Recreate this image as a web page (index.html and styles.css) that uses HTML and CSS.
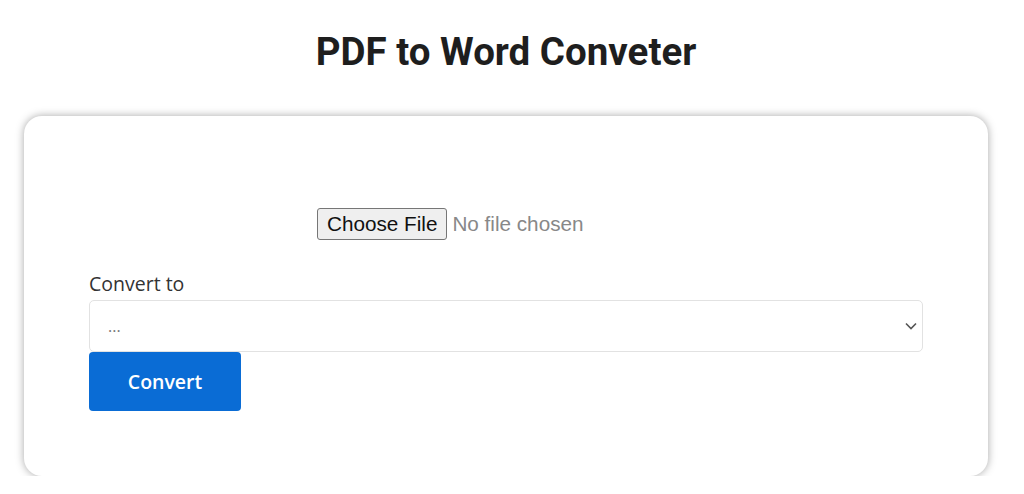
FILE: index.html
```html
<!DOCTYPE html>
<html>
<head>
<meta charset="utf-8">
<link rel="stylesheet" href="styles.css">
</head>
<body>
<div class="page">
<h1 class="title">PDF to Word Conveter</h1>
<div class="card">
  <form class="form">
    <div class="file-row">
      <input class="file-input" type="file">
    </div>
    <label class="label">Convert to</label>
    <div class="select-wrap">
      <select class="select"><option>...</option></select>
      <svg class="chev" width="12" height="8" viewBox="0 0 12 8"><path d="M1 1.5l5 5 5-5" fill="none" stroke="#555" stroke-width="1.6"/></svg>
    </div>
    <button class="btn" type="button">Convert</button>
  </form>
</div>
</div>
</body>
</html>
```
FILE: styles.css
```css
html, body { margin: 0; padding: 0; background: #fff; }
body { font-family: "Open Sans", "Noto Sans", sans-serif; color: #222; }
.page { width: 1012px; }
.title {
  font-family: Roboto, sans-serif;
  font-weight: 700;
  font-size: 38.5px;
  color: #1e1e1e;
  text-align: center;
  margin: 0;
  padding-top: 29px;
  line-height: 46px;
}
.card {
  margin: 41px 24px 0 24px;
  height: 360px;
  background: #fff;
  border-radius: 18px;
  box-shadow: 0 0 9px rgba(0,0,0,0.35);
  box-sizing: border-box;
  padding: 92px 65px 0 65px;
}
.form { display: flex; flex-direction: column; align-items: stretch; }
.file-row { padding-left: 228px; height: 32px; }
.file-input {
  font-family: "Liberation Sans", Arial, sans-serif;
  font-size: 20.7px;
  color: #888;
}
.file-input::file-selector-button {
  font-family: "Liberation Sans", Arial, sans-serif;
  font-size: 20.7px;
  color: #111;
  background: #efefef;
  border: 1px solid #767676;
  border-radius: 3px;
  padding: 1px 9px;
  margin-right: 5px;
  height: 32px;
}
.label { margin-top: 32px; font-size: 19.5px; color: #333; line-height: 24px; }
.select-wrap { position: relative; margin-top: 4px; }
.select {
  width: 100%;
  height: 52px;
  appearance: none;
  -webkit-appearance: none;
  border: 1px solid #e2e2e2;
  border-radius: 5px;
  background: #fff;
  padding: 0 18px;
  font-family: "Open Sans", sans-serif;
  font-size: 16px;
  color: #777;
}
.chev { position: absolute; right: 6px; top: 22px; }
.btn {
  align-self: flex-start;
  width: 152px;
  height: 59px;
  background: #0a6cd5;
  border: none;
  border-radius: 4px;
  color: #fff;
  font-family: "Open Sans", sans-serif;
  font-weight: 600;
  font-size: 19.5px;
}
```
